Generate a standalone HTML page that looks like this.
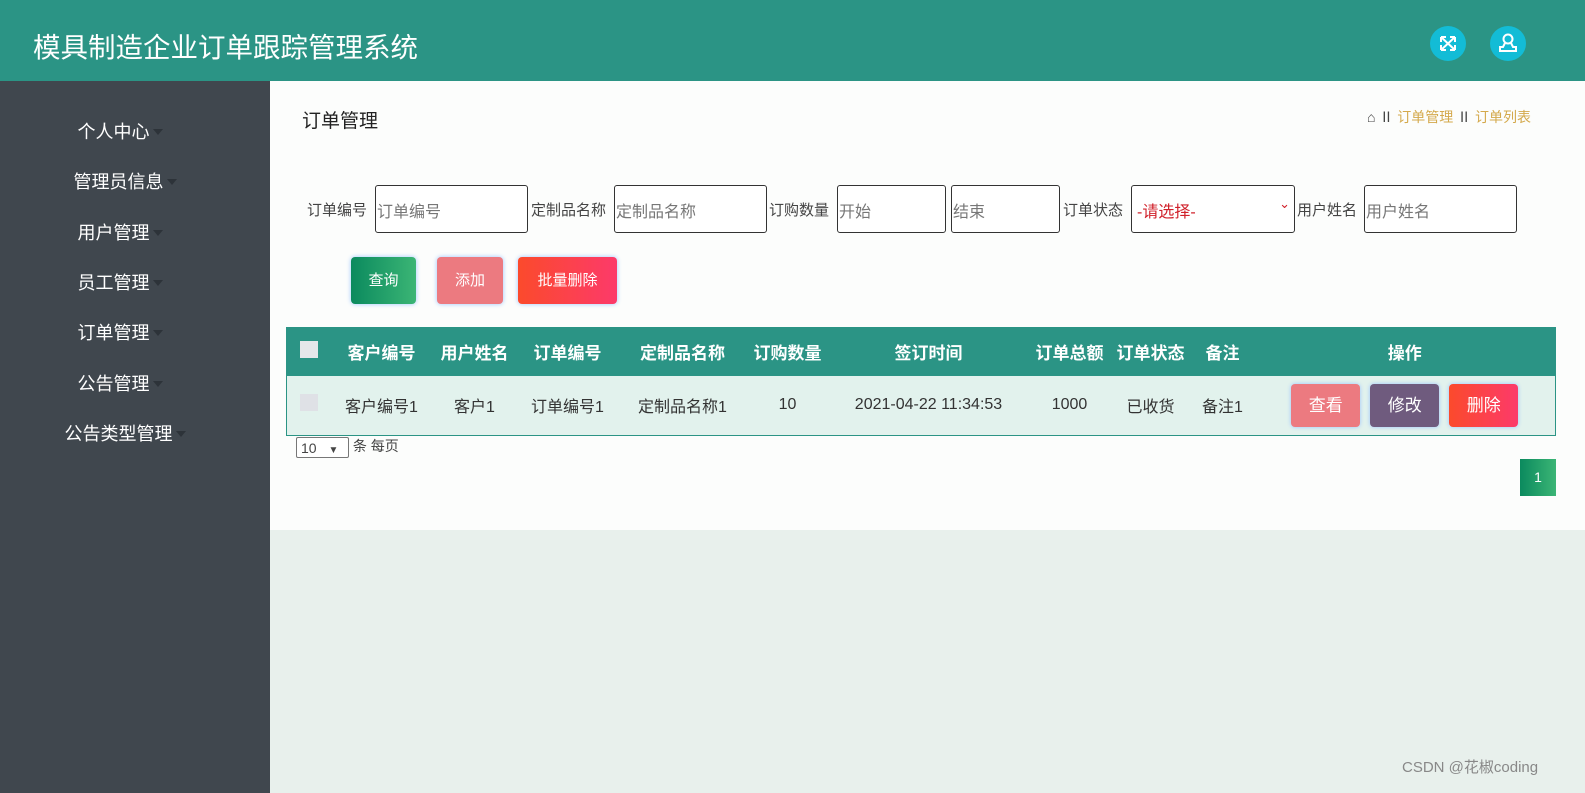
<!DOCTYPE html>
<html><head><meta charset="utf-8"><style>
*{box-sizing:border-box;margin:0;padding:0}
body{width:1585px;height:793px;overflow:hidden;font-family:"Liberation Sans","Noto Sans CJK SC",sans-serif;background:#e8f0ec;position:relative;color:#333}
.top{position:absolute;left:0;top:0;width:1585px;height:81px;background:#2b9485}
.top h1{position:absolute;left:33px;top:25px;font-size:27.5px;font-weight:normal;color:#fff}
.ic{position:absolute;top:26px;width:36px;height:35px;border-radius:50%;background:#13bcd6}
.side{position:absolute;left:0;top:81px;width:270px;height:712px;background:#40474e}
.side div{position:absolute;left:0;width:240px;text-align:center;color:#fff;font-size:18px}
.side div:after{content:"";display:inline-block;border:5px solid transparent;border-top:6px solid #2d3339;margin-left:3px;vertical-align:-2px}
.main{position:absolute;left:270px;top:81px;width:1315px;height:449px;background:#fcfdfc}
.t{position:absolute;white-space:nowrap}
.inp{position:absolute;top:104px;height:48px;border:1px solid #333;border-radius:3px;background:#fff;font-size:16px;color:#777;padding:12px 0 0 1px}
.lab{position:absolute;top:118px;font-size:15px;color:#444}
.btn{position:absolute;top:176px;height:47px;border-radius:4px;color:#fff;font-size:15px;text-align:center;line-height:47px;box-shadow:0 0 5px #9bc4ff}
table{position:absolute;left:16px;top:246px;width:1270px;border-collapse:collapse;border:1px solid #2b9485;table-layout:fixed}
th{background:#2b9485;color:#fff;height:48px;font-size:17px;font-weight:bold;padding:0}
td{background:#e2f2ed;height:60px;font-size:16px;color:#333;text-align:center;padding:0}
.cb{display:inline-block;width:18px;height:17px;background:#dfe1e6}
.ob{display:inline-block;width:69px;height:43px;line-height:43px;border-radius:4px;color:#fff;font-size:17px;margin:0 5px;box-shadow:0 0 4px #9bc4ff}
</style></head><body>
<div class="top"><h1>模具制造企业订单跟踪管理系统</h1>
<div class="ic" style="left:1430px"><svg width="36" height="35" viewBox="0 0 36 35"><g stroke="#fff" stroke-width="2" fill="none"><path d="M11 11l14 13M25 11L11 24M11 11h5M11 11v5M25 11h-5M25 11v5M11 24h5M11 24v-5M25 24h-5M25 24v-5"/></g></svg></div>
<div class="ic" style="left:1490px"><svg width="36" height="35" viewBox="0 0 36 35"><g stroke="#fff" stroke-width="2" fill="none"><circle cx="18" cy="13" r="4.5"/><path d="M15 17l-2 4h-3v4h16v-4h-3l-2-4"/></g></svg></div>
</div>
<div class="side">
<div style="top:37px">个人中心</div>
<div style="top:87px;left:5px">管理员信息</div>
<div style="top:138px">用户管理</div>
<div style="top:188px">员工管理</div>
<div style="top:238px">订单管理</div>
<div style="top:289px">公告管理</div>
<div style="top:339px;left:5px">公告类型管理</div>
</div>
<div class="main">
<div class="t" style="left:32px;top:25px;font-size:19px;color:#222">订单管理</div>
<div class="t" style="left:1097px;top:26px;font-size:14px;color:#d4a94c"><span style="color:#444">⌂ Ⅱ </span>订单管理 <span style="color:#444">Ⅱ</span> 订单列表</div>
<div class="lab" style="left:37px">订单编号</div>
<div class="inp" style="left:105px;width:153px">订单编号</div>
<div class="lab" style="left:261px">定制品名称</div>
<div class="inp" style="left:344px;width:153px">定制品名称</div>
<div class="lab" style="left:499px">订购数量</div>
<div class="inp" style="left:567px;width:109px">开始</div>
<div class="inp" style="left:681px;width:109px">结束</div>
<div class="lab" style="left:793px">订单状态</div>
<div class="inp" style="left:861px;width:164px;color:#d0202a;padding-left:5px">-请选择-<span style="position:absolute;right:4px;top:10px;font-size:13px">⌄</span></div>
<div class="lab" style="left:1027px">用户姓名</div>
<div class="inp" style="left:1094px;width:153px">用户姓名</div>
<div class="btn" style="left:81px;width:65px;background:linear-gradient(90deg,#0b8a5e,#3bb575)">查询</div>
<div class="btn" style="left:167px;width:66px;background:#ec7a80">添加</div>
<div class="btn" style="left:248px;width:99px;background:linear-gradient(90deg,#fb4a2c,#fc3a6a)">批量删除</div>
<table>
<colgroup><col style="width:44px"><col style="width:102px"><col style="width:84px"><col style="width:102px"><col style="width:128px"><col style="width:82px"><col style="width:200px"><col style="width:82px"><col style="width:80px"><col style="width:64px"><col></colgroup>
<tr><th><span class="cb" style="background:#e5e7ea"></span></th><th>客户编号</th><th>用户姓名</th><th>订单编号</th><th>定制品名称</th><th>订购数量</th><th>签订时间</th><th>订单总额</th><th>订单状态</th><th>备注</th><th>操作</th></tr>
<tr><td><span class="cb"></span></td><td>客户编号1</td><td>客户1</td><td>订单编号1</td><td>定制品名称1</td><td>10</td><td>2021-04-22 11:34:53</td><td>1000</td><td>已收货</td><td>备注1</td>
<td><span class="ob" style="background:#ec7a80">查看</span><span class="ob" style="background:#6f5b7e">修改</span><span class="ob" style="background:linear-gradient(90deg,#fb4a2c,#fc3a6a)">删除</span></td></tr>
</table>
<div class="t" style="left:26px;top:355px;font-size:14px;color:#444"><span style="display:inline-block;width:53px;height:21px;border:1px solid #777;border-radius:2px;padding:2px 4px;background:#fff;vertical-align:middle">10 <span style="font-size:10px;margin-left:8px">▼</span></span> 条 每页</div>
<div class="t" style="left:1250px;top:378px;width:36px;height:37px;background:linear-gradient(90deg,#0b8a5e,#3bb575);color:#fff;font-size:14px;text-align:center;line-height:37px">1</div>
</div>
<div class="t" style="left:1402px;top:756px;font-size:15px;color:#888">CSDN @花椒coding</div>
</body></html>
